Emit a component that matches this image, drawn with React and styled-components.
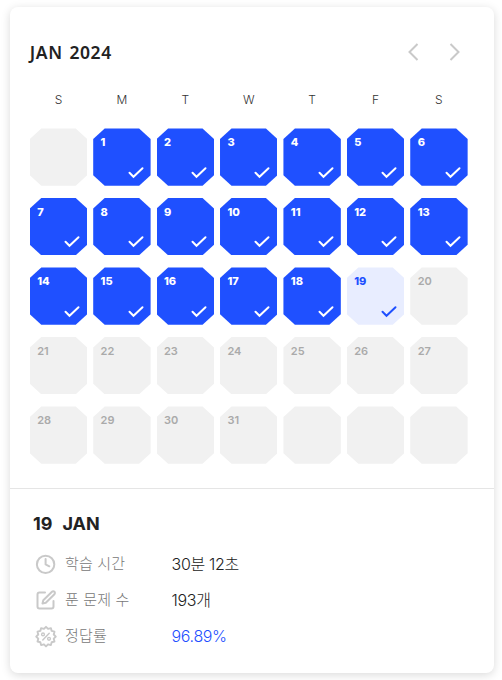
import React from 'react';
import styled, { createGlobalStyle, css } from 'styled-components';

const GlobalStyle = createGlobalStyle`
  * { box-sizing: border-box; }
  body { margin: 0; background: #fff; }
`;

const Page = styled.main`
  width: 502px;
  height: 680px;
  padding: 7px 8px 7px 10px;
  overflow: hidden;
  font-family: Inter, 'Noto Sans CJK KR', sans-serif;
`;

const Card = styled.section`
  height: 666px;
  border-radius: 8px;
  background: #fff;
  box-shadow: 0 2px 10px rgba(0, 0, 0, 0.15);
`;

const Calendar = styled.div`
  height: 482px;
  padding: 26px 26.4px 0 19.8px;
  border-bottom: 1px solid #e5e5e5;
`;

const Header = styled.header`
  display: flex;
  justify-content: space-between;
  align-items: center;
  height: 38px;
`;

const Title = styled.h1`
  margin: -1px 0 0;
  font: 600 17.5px/24px 'Noto Sans', sans-serif;
  letter-spacing: 0.6px;
  word-spacing: 1.6px;
  color: #222;
`;

const Nav = styled.nav`
  display: flex;
  gap: 16px;
  margin-right: 1.6px;
`;

const NavButton = styled.button`
  display: flex;
  width: 24px;
  height: 24px;
  padding: 0;
  border: 0;
  background: none;
  margin-top: -1px;
`;

const Grid = styled.div`
  display: grid;
  grid-template-columns: repeat(7, 1fr);
  column-gap: 6px;
  row-gap: 12.1px;
`;

const Weekdays = styled(Grid)`
  margin: 21px 0 20.4px;
`;

const Weekday = styled.span`
  font-size: 12px;
  font-weight: 300;
  line-height: 16px;
  text-align: center;
  color: #333;
`;

const tones = {
  done: css`background: #1f50ff; color: #fff; font-weight: 800;`,
  today: css`background: #e8edff; color: #1f50ff; font-weight: 800;`,
  idle: css`background: #f1f1f1; color: #aaa; font-weight: 600;`,
};

const Day = styled.div`
  display: flex;
  flex-direction: column;
  justify-content: space-between;
  aspect-ratio: 1;
  padding: 8px 7px 5px 7.4px;
  font-size: 11px;
  line-height: 13px;
  clip-path: polygon(20% 0, 80% 0, 100% 18.5%, 100% 81.5%, 80% 100%, 20% 100%, 0 81.5%, 0 18.5%);
  ${({ $tone }) => tones[$tone]}
`;

const Check = styled.svg`
  display: block;
  align-self: flex-end;
`;

const Summary = styled.div`
  padding: 21px 24px;
`;

const DateTitle = styled.h2`
  display: flex;
  gap: 10px;
  margin: 0 0 8px -1px;
  font-size: 18px;
  font-weight: 700;
  line-height: 28px;
  color: #222;
`;

const Stat = styled.div`
  display: grid;
  grid-template-columns: 24px 106px auto;
  align-items: center;
  height: 36px;
`;

const Label = styled.span`
  padding-left: 7px;
  font-size: 15px;
  line-height: 24px;
  font-weight: 300;
  letter-spacing: 0.15px;
  color: #777;
`;

const Value = styled.span`
  padding-left: 7.6px;
  font-size: 16px;
  line-height: 24px;
  font-weight: 300;
  letter-spacing: -0.35px;
  color: ${({ $accent }) => ($accent ? '#1f50ff' : '#222')};
`;

const Icon = ({ children }) => (
  <svg width="24" height="24" viewBox="0 0 24 24" fill="none" stroke="#c9c9c9" strokeWidth="2" strokeLinecap="round" strokeLinejoin="round">
    {children}
  </svg>
);

const ClockIcon = () => (
  <Icon>
    <circle cx="11.6" cy="12.4" r="8.7" />
    <path d="M11.6 6.9v5.5l3.7 1.9" />
  </Icon>
);

const EditIcon = () => (
  <Icon>
    <path d="M11 4.5H5.5a2 2 0 0 0-2 2v12a2 2 0 0 0 2 2h12a2 2 0 0 0 2-2V13" />
    <path d="m18 3.8a1.65 1.65 0 0 1 2.4 2.4l-8.6 8.6-3.3.8.8-3.3Z" />
  </Icon>
);

const sealPoints = Array.from({ length: 24 }, (_, i) => {
  const r = i % 2 ? 8 : 9.8;
  const a = (i * Math.PI) / 12 - Math.PI / 2;
  return `${(12 + r * Math.cos(a)).toFixed(2)},${(12.6 + r * Math.sin(a)).toFixed(2)}`;
}).join(' ');

const PercentIcon = () => (
  <Icon>
    <polygon points={sealPoints} strokeWidth="1.9" />
    <path d="m15.2 9.2-6.4 6.8" strokeWidth="1.5" />
    <circle cx="9" cy="10.4" r="1.4" strokeWidth="1.4" />
    <circle cx="15" cy="14.8" r="1.4" strokeWidth="1.4" />
  </Icon>
);

const weekdays = ['S', 'M', 'T', 'W', 'T', 'F', 'S'];
const days = Array.from({ length: 35 }, (_, i) => (i > 0 && i < 32 ? i : null));
const toneOf = (day) => (day === 19 ? 'today' : day && day < 19 ? 'done' : 'idle');

export default function App() {
  return (
    <>
      <GlobalStyle />
      <Page>
        <Card>
          <Calendar>
            <Header>
              <Title>JAN 2024</Title>
              <Nav>
                <NavButton aria-label="Previous month">
                  <Icon><path d="m15.5 4-8 8 8 8" strokeLinecap="butt" strokeLinejoin="miter" /></Icon>
                </NavButton>
                <NavButton aria-label="Next month">
                  <Icon><path d="m8.5 4 8 8-8 8" strokeLinecap="butt" strokeLinejoin="miter" /></Icon>
                </NavButton>
              </Nav>
            </Header>
            <Weekdays>
              {weekdays.map((name, i) => <Weekday key={i}>{name}</Weekday>)}
            </Weekdays>
            <Grid>
              {days.map((day, i) => (
                <Day key={i} $tone={toneOf(day)}>
                  <span>{day}</span>
                  {toneOf(day) !== 'idle' && (
                    <Check width="16" height="16" viewBox="0 0 16 16" fill="none" stroke="currentColor" strokeWidth="2">
                      <path d="m1.5 7.8 4 4 9-8.5" strokeLinecap="round" />
                    </Check>
                  )}
                </Day>
              ))}
            </Grid>
          </Calendar>
          <Summary>
            <DateTitle><span>19</span><span>JAN</span></DateTitle>
            <Stat><ClockIcon /><Label>학습 시간</Label><Value>30분 12초</Value></Stat>
            <Stat><EditIcon /><Label>푼 문제 수</Label><Value>193개</Value></Stat>
            <Stat><PercentIcon /><Label>정답률</Label><Value $accent>96.89%</Value></Stat>
          </Summary>
        </Card>
      </Page>
    </>
  );
}
